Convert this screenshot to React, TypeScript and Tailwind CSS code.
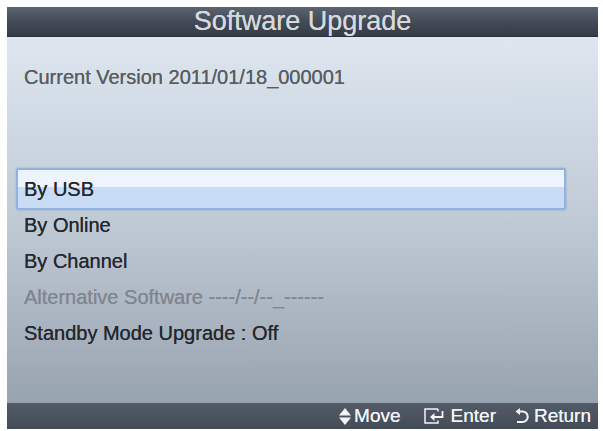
import React from 'react';

const items = [
  { label: 'By USB', selected: true },
  { label: 'By Online' },
  { label: 'By Channel' },
  { label: 'Alternative Software ----/--/--_------', disabled: true },
  { label: 'Standby Mode Upgrade : Off' },
];

const MoveIcon = () => (
  <svg width="12" height="17" viewBox="0 0 12 17" className="mr-[3px]">
    <path d="M6 0 L12 7.5 H0 Z" fill="#f2f4f6" />
    <path d="M6 17 L12 9.5 H0 Z" fill="#f2f4f6" />
  </svg>
);

const EnterIcon = () => (
  <svg width="22" height="16" viewBox="0 0 22 16" className="mr-[5px]">
    <path d="M14 1 H1 V15 H14 V12.5" fill="none" stroke="#f2f4f6" strokeWidth="1.5" />
    <path d="M14 1 V3.5" fill="none" stroke="#f2f4f6" strokeWidth="1.5" />
    <path d="M18.5 3 V9 H9" fill="none" stroke="#f2f4f6" strokeWidth="1.8" />
    <path d="M6 9 L10.5 5 V13 Z" fill="#f2f4f6" />
  </svg>
);

const ReturnIcon = () => (
  <svg width="14" height="16" viewBox="0 0 14 16" className="mr-[5px]">
    <path d="M3.5 3.5 H7.5 A5.2 5.2 0 0 1 7.5 14 H2" fill="none" stroke="#f2f4f6" strokeWidth="2" />
    <path d="M0.5 3.5 L5 0 V7 Z" fill="#f2f4f6" />
  </svg>
);

export default function App() {
  return (
    <div className="w-[603px] h-[431px] bg-white pt-[7px] pl-[7px]" style={{ fontFamily: '"Liberation Sans", Arial, sans-serif' }}>
      <div className="w-[591px] h-[422px] flex flex-col">
        {/* Header */}
        <div className="h-[30px] flex items-center justify-center bg-gradient-to-b from-[#5b6471] via-[#434b57] to-[#353c47] border-b border-[#2a3039]">
          <span className="text-[27px] leading-none text-[#d5d9dd] pb-[1px] [text-shadow:0_0_0.5px_#d5d9dd]">Software Upgrade</span>
        </div>

        {/* Body */}
        <div className="flex-1 flex flex-col bg-gradient-to-b from-[#dee7f0] via-[#c0cad5] to-[#98a3b0] px-[9px] [text-shadow:0_0_0.5px_currentColor]">
          <div className="h-9 mt-[22px] flex items-center px-[8px] text-[20px] text-[#595d63]">
            Current Version 2011/01/18_000001
          </div>

          <div className="mt-[76px] flex flex-col">
            {items.map((it) => (
              <div key={it.label} className="h-9 flex items-center">
                {it.selected ? (
                  <div className="w-[550px] h-[42px] -my-[3px] flex items-center px-[6px] rounded-[2px] border-2 border-[#8fb2e3] bg-gradient-to-b from-[#eef4fd] from-45% to-[#c9dcf5] to-45% shadow-[0_0_2px_rgba(90,130,200,0.5)]">
                    <span className="text-[20px] text-[#25282d]">{it.label}</span>
                  </div>
                ) : (
                  <span className={`px-[8px] text-[20px] ${it.disabled ? 'text-[#80868e]' : 'text-[#25282d]'}`}>{it.label}</span>
                )}
              </div>
            ))}
          </div>
        </div>

        {/* Footer */}
        <div className="h-[26px] flex items-center justify-end pr-[7px] bg-gradient-to-b from-[#535b67] to-[#444c58] text-[19px] text-[#f2f4f6] [text-shadow:0_0_0.6px_#f2f4f6]">
          <div className="flex items-center">
            <MoveIcon />
            <span>Move</span>
          </div>
          <div className="flex items-center ml-[23px]">
            <EnterIcon />
            <span>Enter</span>
          </div>
          <div className="flex items-center ml-[19px]">
            <ReturnIcon />
            <span>Return</span>
          </div>
        </div>
      </div>
    </div>
  );
}
